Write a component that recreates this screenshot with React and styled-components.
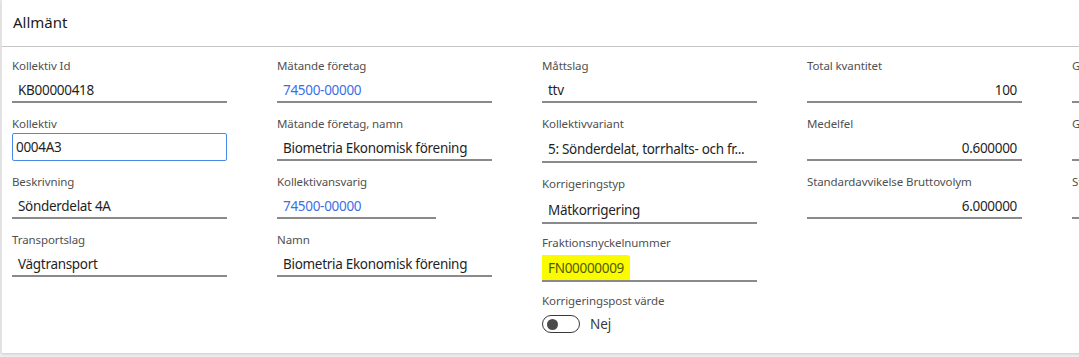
import React from 'react';
import styled, { createGlobalStyle } from 'styled-components';

const GlobalStyle = createGlobalStyle`
  html, body {
    margin: 0;
    padding: 0;
    background: #f0f0f0;
  }
  body {
    font-family: "Noto Sans", "Open Sans", sans-serif;
  }
  #root {
    width: 1079px;
    height: 357px;
    overflow: hidden;
  }
`;

const App = () => (
    <>
        <GlobalStyle />
        <Card>
            <Header>Allmänt</Header>
            <Body>
                <Column>
                    <Field>
                        <Label>Kollektiv Id</Label>
                        <Value>KB00000418</Value>
                    </Field>
                    <Field>
                        <Label>Kollektiv</Label>
                        <Input readOnly value="0004A3" />
                    </Field>
                    <Field>
                        <Label>Beskrivning</Label>
                        <Value>Sönderdelat 4A</Value>
                    </Field>
                    <Field>
                        <Label>Transportslag</Label>
                        <Value>Vägtransport</Value>
                    </Field>
                </Column>

                <Column>
                    <Field>
                        <Label>Mätande företag</Label>
                        <Value $link>74500-00000</Value>
                    </Field>
                    <Field>
                        <Label>Mätande företag, namn</Label>
                        <Value>Biometria Ekonomisk förening</Value>
                    </Field>
                    <Field>
                        <Label>Kollektivansvarig</Label>
                        <Value $link $width={159}>74500-00000</Value>
                    </Field>
                    <Field>
                        <Label>Namn</Label>
                        <Value>Biometria Ekonomisk förening</Value>
                    </Field>
                </Column>

                <Column>
                    <Field>
                        <Label>Måttslag</Label>
                        <Value>ttv</Value>
                    </Field>
                    <Field $gap={12}>
                        <Label>Kollektivvariant</Label>
                        <Value $height={27}>5: Sönderdelat, torrhalts- och fr...</Value>
                    </Field>
                    <Field $gap={10}>
                        <Label>Korrigeringstyp</Label>
                        <Value $height={28}>Mätkorrigering</Value>
                    </Field>
                    <Field $gap={10}>
                        <Label>Fraktionsnyckelnummer</Label>
                        <Value $height={27}>
                            <Marker>FN00000009</Marker>
                        </Value>
                    </Field>
                    <Field>
                        <Label>Korrigeringspost värde</Label>
                        <ToggleRow>
                            <Toggle>
                                <Knob />
                            </Toggle>
                            <ToggleText>Nej</ToggleText>
                        </ToggleRow>
                    </Field>
                </Column>

                <Column>
                    <Field>
                        <Label>Total kvantitet</Label>
                        <Value $align="right">100</Value>
                    </Field>
                    <Field>
                        <Label>Medelfel</Label>
                        <Value $align="right">0.600000</Value>
                    </Field>
                    <Field>
                        <Label>Standardavvikelse Bruttovolym</Label>
                        <Value $align="right">6.000000</Value>
                    </Field>
                </Column>

                <Column>
                    <Field>
                        <Label>Grotvolym</Label>
                        <Value $align="right"></Value>
                    </Field>
                    <Field>
                        <Label>Gallringsandel</Label>
                        <Value $align="right"></Value>
                    </Field>
                    <Field>
                        <Label>Stamvolym</Label>
                        <Value $align="right"></Value>
                    </Field>
                </Column>
            </Body>
        </Card>
    </>
);

const Card = styled.section`
    box-sizing: border-box;
    width: 1200px;
    height: 353px;
    margin-left: 1px;
    background: #ffffff;
    border-left: 1px solid #e3e3e3;
    box-shadow: 0 1px 3px rgba(0, 0, 0, 0.16);
`;

const Header = styled.div`
    box-sizing: border-box;
    height: 47px;
    padding-left: 11px;
    padding-bottom: 2px;
    display: flex;
    align-items: center;
    font-size: 15px;
    color: #1b1a19;
    border-bottom: 1px solid #c8c6c4;
`;

const Body = styled.div`
    display: flex;
    flex-direction: row;
    gap: 50px;
    padding: 10px 0 0 10px;
`;

const Column = styled.div`
    width: 215px;
    flex-shrink: 0;
    display: flex;
    flex-direction: column;
`;

const Field = styled.div`
    display: flex;
    flex-direction: column;
    margin-bottom: ${p => p.$gap ?? 12}px;
`;

const Label = styled.div`
    height: 17px;
    line-height: 17px;
    font-size: 11.5px;
    letter-spacing: -0.1px;
    color: #505050;
    white-space: nowrap;
`;

const Value = styled.div`
    box-sizing: border-box;
    width: ${p => p.$width ?? 215}px;
    height: ${p => p.$height ?? 25}px;
    line-height: ${p => p.$height ?? 25}px;
    margin-top: 4px;
    padding: 0 5px 0 6px;
    border-bottom: 2px solid #8a8a8a;
    font-size: 13.5px;
    letter-spacing: -0.3px;
    color: ${p => p.$link ? '#3b6fe8' : '#1f1f1f'};
    text-align: ${p => p.$align ?? 'left'};
    white-space: nowrap;
    overflow: hidden;
`;

const Input = styled.input`
    box-sizing: border-box;
    width: 215px;
    height: 28px;
    margin: 1px 0 0;
    padding: 0 3px;
    border: 1px solid #4a8ae6;
    border-radius: 2px;
    font-family: inherit;
    font-size: 13.5px;
    letter-spacing: -0.3px;
    color: #1f1f1f;
    outline: none;
`;

const Marker = styled.span`
    display: inline-block;
    margin-left: -11px;
    padding: 0 6px 0 11px;
    height: 26px;
    line-height: 26px;
    background: #fbfb00;
    border-radius: 3px;
    color: #4f5c00;
    vertical-align: top;
`;

const ToggleRow = styled.div`
    display: flex;
    flex-direction: row;
    align-items: center;
    gap: 10px;
    margin-top: 6px;
    height: 18px;
`;

const Toggle = styled.div`
    box-sizing: border-box;
    width: 38px;
    height: 18px;
    border: 1px solid #3a3a3a;
    border-radius: 9px;
    display: flex;
    align-items: center;
    padding-left: 4px;
`;

const Knob = styled.div`
    width: 11px;
    height: 11px;
    border-radius: 50%;
    background: #4a4a4a;
`;

const ToggleText = styled.span`
    font-size: 13.5px;
    color: #3a3a3a;
`;

export default App;
